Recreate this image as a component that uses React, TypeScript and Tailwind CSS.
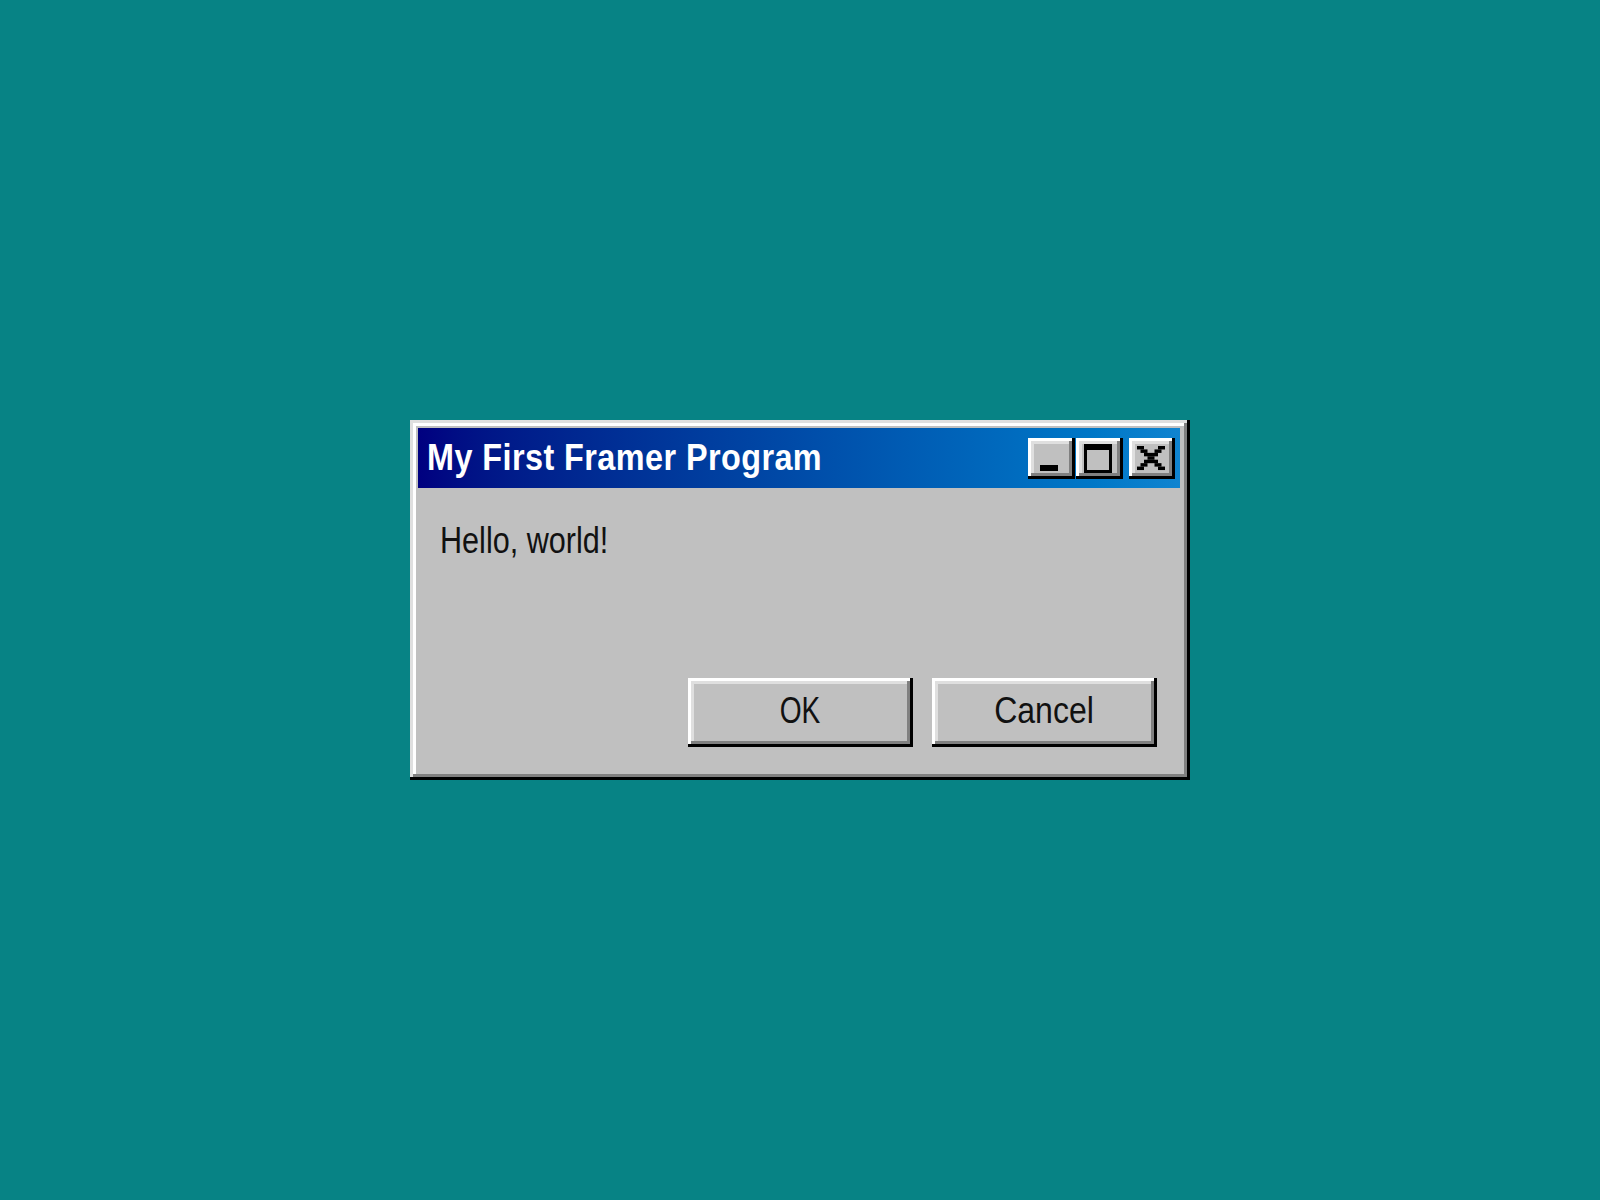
import React from 'react';

// Win98-style bevels: first shadow is drawn on top.
const raised =
  'shadow-[inset_-3px_-3px_0_#000,inset_3px_3px_0_#fff,inset_-6px_-6px_0_#808080,inset_6px_6px_0_#dfdfdf]';
const windowBevel =
  'shadow-[inset_-3px_-3px_0_#000,inset_3px_3px_0_#dfdfdf,inset_-6px_-6px_0_#808080,inset_6px_6px_0_#fff]';

// 8x7 pixel grid of the classic close glyph
const CLOSE_ROWS: [number, number][][] = [
  [[0, 2], [6, 2]],
  [[1, 2], [5, 2]],
  [[2, 4]],
  [[3, 2]],
  [[2, 4]],
  [[1, 2], [5, 2]],
  [[0, 2], [6, 2]],
];

function MinimizeIcon() {
  return (
    <svg width="47" height="41" viewBox="0 0 47 41">
      <rect x="12" y="27" width="18" height="6" fill="#000" />
    </svg>
  );
}

function MaximizeIcon() {
  return (
    <svg width="47" height="41" viewBox="0 0 47 41">
      <path d="M8 6h28v29H8z M11 12v20h22V12z" fill="#000" fillRule="evenodd" />
    </svg>
  );
}

function CloseIcon() {
  const cw = 3.5;
  const ch = 24 / 7;
  return (
    <svg width="46" height="41" viewBox="0 0 46 41">
      {CLOSE_ROWS.map((row, r) =>
        row.map(([c, n], i) => (
          <rect key={`${r}-${i}`} x={8 + c * cw} y={8 + r * ch} width={n * cw} height={ch + 0.05} fill="#000" />
        )),
      )}
    </svg>
  );
}

function TitleButton({ children, w }: { children: React.ReactNode; w: string }) {
  return <div className={`${w} h-[41px] bg-[#c0c0c0] ${raised}`}>{children}</div>;
}

function DialogButton({ label, squeeze }: { label: string; squeeze: string }) {
  return (
    <div className={`w-[225px] h-[69px] bg-[#c0c0c0] ${raised} flex items-center justify-center pb-[4px]`}>
      <span className={`text-[36px] leading-none text-[#111] ${squeeze}`}>{label}</span>
    </div>
  );
}

export default function App() {
  return (
    <div className="w-full h-screen bg-[#078385] flex items-center justify-center font-['Liberation_Sans',Arial,sans-serif]">
      <div className={`w-[780px] h-[360px] bg-[#c0c0c0] ${windowBevel} flex flex-col pt-[8px] pl-[8px] pr-[10px] pb-[8px]`}>
        <div className="h-[60px] bg-linear-to-r from-[#000080] to-[#1084d0] flex items-center justify-between pl-[9px] pr-[5px]">
          <span className="text-white font-bold text-[37px] leading-none tracking-[0.5px] pb-[2px] origin-left scale-x-[0.875]">
            My First Framer Program
          </span>
          <div className="flex items-center">
            <TitleButton w="w-[47px]">
              <MinimizeIcon />
            </TitleButton>
            <div className="ml-[1px]">
              <TitleButton w="w-[47px]">
                <MaximizeIcon />
              </TitleButton>
            </div>
            <div className="ml-[6px]">
              <TitleButton w="w-[46px]">
                <CloseIcon />
              </TitleButton>
            </div>
          </div>
        </div>
        <div className="flex-1 flex flex-col pl-[22px] pt-[35px] pb-[25px] pr-[23px]">
          <div className="text-[36px] leading-none text-[#111] origin-left scale-x-[0.85]">Hello, world!</div>
          <div className="mt-auto flex justify-end gap-[19px]">
            <DialogButton label="OK" squeeze="scale-x-[0.78]" />
            <DialogButton label="Cancel" squeeze="scale-x-[0.89]" />
          </div>
        </div>
      </div>
    </div>
  );
}
